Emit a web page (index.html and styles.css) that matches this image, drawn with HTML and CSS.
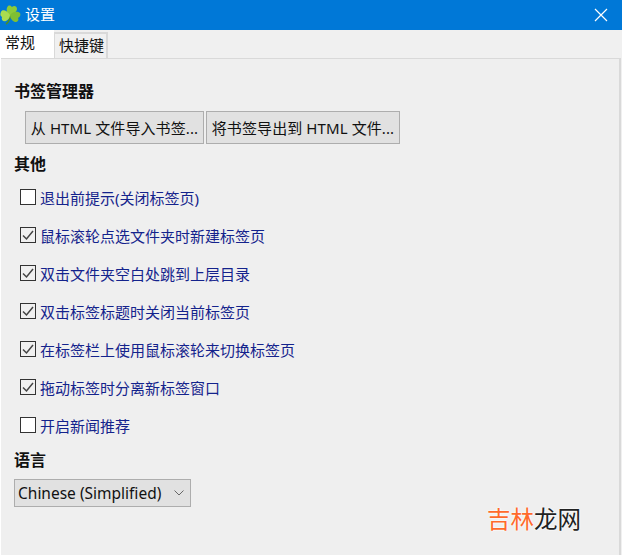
FILE: index.html
```html
<!DOCTYPE html>
<html lang="zh-CN">
<head>
  <meta charset="UTF-8">
  <title>设置</title>
  <link rel="stylesheet" href="styles.css">
</head>
<body>
  <div class="window">
    <div class="titlebar">
      <svg class="app-icon" width="21" height="20" viewBox="0 0 21 20">
        <path d="M10 10C10 14 9 17 6 19" fill="none" stroke="#4f8f1e" stroke-width="1.6"/>
        <path d="M10 11C6 8 6 3 8 1C10 0 11 1 12 2C14 0 17 1 17 4C17 7 13 9 10 11Z" fill="#8ccb3a"/>
        <path d="M10 10C7 5 2 4 1 7C0 9 0 11 2 12C1 15 3 17 6 16C8 15 10 13 10 10Z" fill="#a9dc50"/>
        <path d="M10 10C13 6 18 6 20 8C21 10 20 12 18 13C19 15 18 17 15 17C12 16 10 13 10 10Z" fill="#7fbf33"/>
      </svg>
      <span class="title">设置</span>
      <svg class="close" width="14" height="14" viewBox="0 0 14 14">
        <path d="M1 1L13 13M13 1L1 13" stroke="#fff" stroke-width="1.2" fill="none"/>
      </svg>
    </div>

    <div class="tabs">
      <div class="tab active">常规</div>
      <div class="tab">快捷键</div>
    </div>

    <div class="panel">
      <h2 class="heading first">书签管理器</h2>
      <div class="buttons">
        <button class="btn btn-import">从 HTML 文件导入书签...</button>
        <button class="btn btn-export">将书签导出到 HTML 文件...</button>
      </div>

      <h2 class="heading other">其他</h2>
      <ul class="options">
        <li class="option"><span class="box"></span>退出前提示(关闭标签页)</li>
        <li class="option"><span class="box checked"><svg width="14" height="14" viewBox="0 0 14 14"><path d="M2 7.5L5.5 11L12 3" fill="none" stroke="#444" stroke-width="1.5"/></svg></span>鼠标滚轮点选文件夹时新建标签页</li>
        <li class="option"><span class="box checked"><svg width="14" height="14" viewBox="0 0 14 14"><path d="M2 7.5L5.5 11L12 3" fill="none" stroke="#444" stroke-width="1.5"/></svg></span>双击文件夹空白处跳到上层目录</li>
        <li class="option"><span class="box checked"><svg width="14" height="14" viewBox="0 0 14 14"><path d="M2 7.5L5.5 11L12 3" fill="none" stroke="#444" stroke-width="1.5"/></svg></span>双击标签标题时关闭当前标签页</li>
        <li class="option"><span class="box checked"><svg width="14" height="14" viewBox="0 0 14 14"><path d="M2 7.5L5.5 11L12 3" fill="none" stroke="#444" stroke-width="1.5"/></svg></span>在标签栏上使用鼠标滚轮来切换标签页</li>
        <li class="option"><span class="box checked"><svg width="14" height="14" viewBox="0 0 14 14"><path d="M2 7.5L5.5 11L12 3" fill="none" stroke="#444" stroke-width="1.5"/></svg></span>拖动标签时分离新标签窗口</li>
        <li class="option"><span class="box"></span>开启新闻推荐</li>
      </ul>

      <h2 class="heading lang">语言</h2>
      <div class="select">
        <span>Chinese (Simplified)</span>
        <svg width="10" height="6" viewBox="0 0 10 6"><path d="M0.5 0.5L5 5L9.5 0.5" fill="none" stroke="#666" stroke-width="1"/></svg>
      </div>
    </div>

    <div class="watermark"><span class="orange">吉林</span>龙网</div>
  </div>
</body>
</html>
```
FILE: styles.css
```css
* {
  box-sizing: border-box;
}

html, body {
  margin: 0;
  padding: 0;
}

body {
  font-family: "Noto Sans", "Noto Sans CJK SC", sans-serif;
  font-size: 15px;
  background: #f0f0f0;
  overflow: hidden;
}

.window {
  position: relative;
  width: 622px;
  height: 555px;
  display: flex;
  flex-direction: column;
  background: linear-gradient(to right, #fff 1px, #f0f0f0 1px);
}

.titlebar {
  height: 30px;
  flex: none;
  background: #0078d7;
  color: #fff;
  display: flex;
  align-items: center;
}

.app-icon {
  margin-top: 0;
}

.title {
  margin-left: 4px;
  font-size: 15px;
  line-height: 27px;
  height: 28px;
}

.close {
  margin-left: auto;
  margin-right: 14px;
}

.tabs {
  height: 28px;
  flex: none;
  display: flex;
  align-items: flex-start;
}

.tab {
  width: 54px;
  height: 26px;
  margin-top: 2px;
  line-height: 23px;
  padding-left: 4px;
  background: #f0f0f0;
  border: 2px solid #d9d9d9;
  border-left-width: 1px;
  border-bottom: none;
  color: #111;
}

.tab.active {
  height: 28px;
  margin-top: 0;
  padding-left: 5px;
  line-height: 24px;
  background: #fff;
  border: none;
}

.panel {
  flex: 1;
  margin: 0 1px 0 1px;
  padding: 0 0 0 13px;
  background: #efefef;
  border-top: 1px solid #d9d9d9;
  border-right: 2px solid #d9d9d9;
}

.heading {
  margin: 0;
  font-size: 16px;
  line-height: 20px;
  font-weight: bold;
  color: #111;
}

.heading.first {
  margin-top: 22px;
}

.heading.other {
  margin-top: 10px;
}

.heading.lang {
  margin-top: 12px;
}

.buttons {
  display: flex;
  gap: 2px;
  margin: 10px 0 0 11px;
}

.btn {
  height: 33px;
  padding: 0;
  font-family: inherit;
  font-size: 15px;
  letter-spacing: 0.1px;
  color: #111;
  background: #e1e1e1;
  border: 1px solid #adadad;
  white-space: nowrap;
}

.btn-import {
  width: 179px;
}

.btn-export {
  width: 194px;
}

.options {
  list-style: none;
  margin: 10px 0 0 6px;
  padding: 0;
  display: flex;
  flex-direction: column;
  gap: 12px;
}

.option {
  height: 26px;
  display: flex;
  align-items: center;
  color: #14238c;
}

.box {
  width: 16px;
  height: 16px;
  margin-right: 4px;
  background: #fff;
  border: 1px solid #333;
  display: flex;
  align-items: center;
  justify-content: center;
}

.box.checked {
  background: #f0f0f0;
}

.select {
  width: 177px;
  height: 28px;
  margin-top: 9px;
  padding: 0 6px 0 3px;
  display: flex;
  align-items: center;
  justify-content: space-between;
  font-size: 15.5px;
  color: #111;
  background: #e1e1e1;
  border: 1px solid #adadad;
}

.watermark {
  position: absolute;
  left: 487px;
  top: 506px;
  font-size: 23.5px;
  line-height: 26px;
  color: #222;
  text-shadow: 0 0 2px #fff, 0 0 2px #fff;
}

.orange {
  color: #ff6a2b;
}
```
